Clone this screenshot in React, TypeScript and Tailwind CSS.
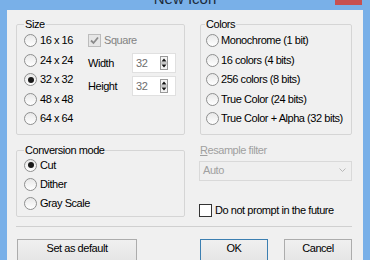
import type { ReactNode } from 'react';

function Radio({ checked = false }: { checked?: boolean }) {
  return (
    <span className="flex h-[13px] w-[13px] shrink-0 items-center justify-center rounded-full border border-[#8e8f8f] bg-gradient-to-b from-[#e8e8e8] to-white">
      {checked && <span className="h-[6px] w-[6px] rounded-full bg-[#1a1a1a]" />}
    </span>
  );
}

function RadioRow({ label, checked, gap = 'gap-[3px]', h = 'h-[19.5px]' }: { label: string; checked?: boolean; gap?: string; h?: string }) {
  return (
    <div className={`flex items-center ${gap} ${h}`}>
      <Radio checked={checked} />
      <span>{label}</span>
    </div>
  );
}

function Group({ title, legendClass, className, children }: { title: string; legendClass: string; className: string; children: ReactNode }) {
  return (
    <fieldset className={`rounded-[2px] border border-[#d5d5d5] ${className}`}>
      <legend className={`px-[1px] leading-[13px] ${legendClass}`}>{title}</legend>
      {children}
    </fieldset>
  );
}

function SpinBox({ value }: { value: string }) {
  return (
    <div className="flex h-[20px] w-[44px] items-center justify-between border border-[#e0e0e0] bg-white pl-[3px] pr-[7px] text-[#6d6d6d]">
      <span>{value}</span>
      <svg width="8" height="14" viewBox="0 0 8 14">
        <rect x="0.5" y="0.5" width="7" height="13" fill="#f4f4f4" stroke="#9a9a9a" />
        <path d="M4 2.5 L6.5 5.5 L1.5 5.5 Z" fill="#111" />
        <line x1="1" y1="7" x2="7" y2="7" stroke="#9a9a9a" />
        <path d="M4 11.5 L6.5 8.5 L1.5 8.5 Z" fill="#111" />
      </svg>
    </div>
  );
}

function Button({ label, className }: { label: string; className: string }) {
  return (
    <button
      type="button"
      className={`flex h-[23px] items-center justify-center border bg-gradient-to-b from-[#f0f0f0] to-[#e5e5e5] pb-[4px] ${className}`}
    >
      {label}
    </button>
  );
}

export default function App() {
  return (
    <div
      className="flex h-[260px] w-[370px] flex-col overflow-hidden bg-[#79b0e8] text-[11px] leading-[13px] tracking-[-0.45px] text-black"
      style={{ fontFamily: '"Liberation Sans", Arial, sans-serif' }}
    >
      <div className="relative h-[10px] shrink-0 overflow-hidden">
        <div className="mt-[-9px] text-center text-[15px] leading-[15px] tracking-normal text-[#1c2b3a]">New Icon</div>
        <div className="absolute right-[8px] top-0 h-[5px] w-[27px] bg-[#c75050]" />
      </div>

      <div className="mx-[7px] flex-1 bg-[#f0f0f0] pl-[9px] pr-[11px] pt-[8px]">
        <div className="grid grid-cols-[169px_152px] gap-x-[15px]">
          <div className="flex flex-col">
            <Group title="Size" legendClass="ml-[7px]" className="h-[117px]">
              <div className="flex pl-[7px]">
                <div className="flex w-[64px] flex-col">
                  <RadioRow label="16 x 16" />
                  <RadioRow label="24 x 24" />
                  <RadioRow label="32 x 32" checked />
                  <RadioRow label="48 x 48" />
                  <RadioRow label="64 x 64" />
                </div>
                <div className="flex flex-col">
                  <div className="flex h-[19.5px] items-center gap-[3px] text-[#838383]">
                    <span className="flex h-[13px] w-[13px] items-center justify-center border border-[#bcbcbc] bg-[#e6e6e6]">
                      <svg width="9" height="9" viewBox="0 0 9 9">
                        <path d="M1 4.5 L3.5 7 L8 1.5" fill="none" stroke="#8a8a8a" strokeWidth="1.8" />
                      </svg>
                    </span>
                    <span>Square</span>
                  </div>
                  <div className="mt-[2.5px] flex h-[20px] items-center">
                    <span className="w-[44px]">Width</span>
                    <SpinBox value="32" />
                  </div>
                  <div className="mt-[3px] flex h-[20px] items-center">
                    <span className="w-[44px]">Height</span>
                    <SpinBox value="32" />
                  </div>
                </div>
              </div>
            </Group>

            <Group title="Conversion mode" legendClass="ml-[7px]" className="mt-[9px] h-[73px]">
              <div className="-mt-[1.5px] flex flex-col pl-[7px]">
                <RadioRow label="Cut" checked h="h-[19px]" />
                <RadioRow label="Dither" h="h-[19px]" />
                <RadioRow label="Gray Scale" h="h-[19px]" />
              </div>
            </Group>
          </div>

          <div className="flex flex-col">
            <Group title="Colors" legendClass="ml-[4px]" className="h-[117px]">
              <div className="flex flex-col pl-[5px]">
                <RadioRow label="Monochrome (1 bit)" gap="gap-[2px]" />
                <RadioRow label="16 colors (4 bits)" gap="gap-[2px]" />
                <RadioRow label="256 colors (8 bits)" gap="gap-[2px]" />
                <RadioRow label="True Color (24 bits)" gap="gap-[2px]" />
                <RadioRow label="True Color + Alpha (32 bits)" gap="gap-[2px]" />
              </div>
            </Group>

            <div className="mt-[9px] text-[#a0a0a0]">
              <span className="underline">R</span>esample filter
            </div>
            <div className="-ml-[1px] mt-[3.5px] flex h-[20px] items-center justify-between border border-[#d9d9d9] bg-[#efefef] pl-[3px] pr-[5px] text-[#a0a0a0]">
              <span>Auto</span>
              <svg width="7" height="5" viewBox="0 0 7 5">
                <path d="M0.5 0.5 L3.5 3.5 L6.5 0.5" fill="none" stroke="#b8b8b8" />
              </svg>
            </div>

            <div className="-ml-[1px] mt-[23px] flex h-[13px] items-center gap-[3px]">
              <span className="h-[13px] w-[13px] border border-[#333] bg-white" />
              <span>Do not prompt in the future</span>
            </div>
          </div>
        </div>

        <div className="mt-[9px] border-t border-[#d0d0d0]" />

        <div className="mt-[12px] flex items-start justify-between">
          <Button label="Set as default" className="ml-[1px] w-[120px] border-[#acacac]" />
          <div className="flex gap-[16px]">
            <Button label="OK" className="w-[68px] border-[#3c7fb1]" />
            <Button label="Cancel" className="w-[68px] border-[#acacac]" />
          </div>
        </div>
      </div>
    </div>
  );
}
